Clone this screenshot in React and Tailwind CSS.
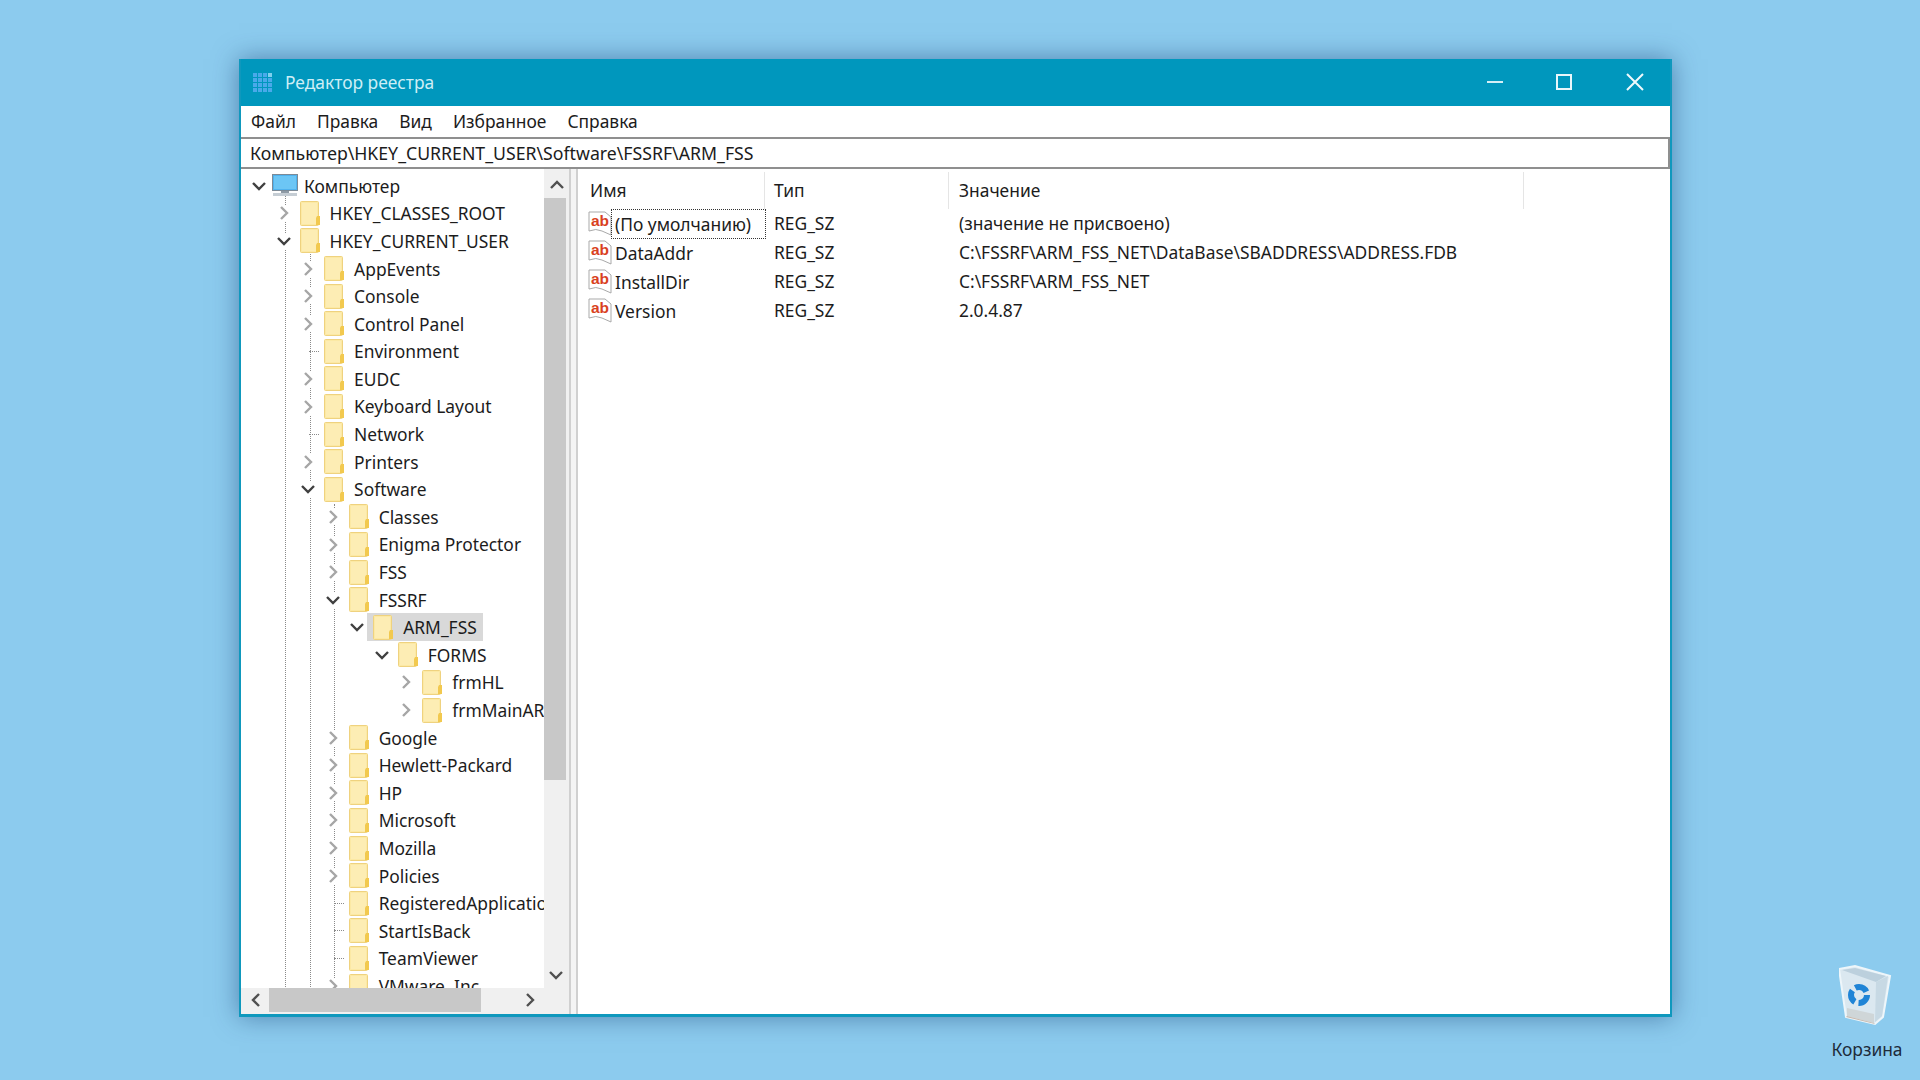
const tree = [
  { label: 'Компьютер', level: 0, open: true, root: true },
  { label: 'HKEY_CLASSES_ROOT', level: 1, closed: true },
  { label: 'HKEY_CURRENT_USER', level: 1, open: true },
  { label: 'AppEvents', level: 2, closed: true },
  { label: 'Console', level: 2, closed: true },
  { label: 'Control Panel', level: 2, closed: true },
  { label: 'Environment', level: 2, leaf: true },
  { label: 'EUDC', level: 2, closed: true },
  { label: 'Keyboard Layout', level: 2, closed: true },
  { label: 'Network', level: 2, leaf: true },
  { label: 'Printers', level: 2, closed: true },
  { label: 'Software', level: 2, open: true },
  { label: 'Classes', level: 3, closed: true },
  { label: 'Enigma Protector', level: 3, closed: true },
  { label: 'FSS', level: 3, closed: true },
  { label: 'FSSRF', level: 3, open: true },
  { label: 'ARM_FSS', level: 4, open: true, selected: true },
  { label: 'FORMS', level: 5, open: true },
  { label: 'frmHL', level: 6, closed: true },
  { label: 'frmMainARM', level: 6, closed: true },
  { label: 'Google', level: 3, closed: true },
  { label: 'Hewlett-Packard', level: 3, closed: true },
  { label: 'HP', level: 3, closed: true },
  { label: 'Microsoft', level: 3, closed: true },
  { label: 'Mozilla', level: 3, closed: true },
  { label: 'Policies', level: 3, closed: true },
  { label: 'RegisteredApplications', level: 3, leaf: true },
  { label: 'StartIsBack', level: 3, leaf: true },
  { label: 'TeamViewer', level: 3, leaf: true },
  { label: 'VMware, Inc.', level: 3, closed: true },
]

const values = [
  { name: '(По умолчанию)', type: 'REG_SZ', value: '(значение не присвоено)', focus: true },
  { name: 'DataAddr', type: 'REG_SZ', value: 'C:\\FSSRF\\ARM_FSS_NET\\DataBase\\SBADDRESS\\ADDRESS.FDB' },
  { name: 'InstallDir', type: 'REG_SZ', value: 'C:\\FSSRF\\ARM_FSS_NET' },
  { name: 'Version', type: 'REG_SZ', value: '2.0.4.87' },
]

function Chevron({ dir, className }) {
  const d = {
    down: 'M2 5 L8 11 L14 5',
    right: 'M5 2 L11 8 L5 14',
    up: 'M2 11 L8 5 L14 11',
    left: 'M11 2 L5 8 L11 14',
  }[dir]
  return (
    <svg width="16" height="16" viewBox="0 0 16 16" fill="none" className={className}>
      <path d={d} stroke="currentColor" strokeWidth="2.4" />
    </svg>
  )
}

function Folder() {
  return (
    <svg width="21" height="25" viewBox="0 0 21 25" className="shrink-0">
      <rect x="0.5" y="0.5" width="18" height="24" rx="1" fill="#fce9a4" stroke="#efd27f" />
      <rect x="2" y="2" width="15" height="21" fill="#fdedb4" />
      <path d="M17 15 h3 v9 h-4 v-7 z" fill="#f2c94f" />
    </svg>
  )
}

function ComputerIcon() {
  return (
    <svg width="26" height="24" viewBox="0 0 26 24" className="shrink-0">
      <rect x="0.5" y="0.5" width="25" height="16" fill="#4fb2ee" stroke="#7c8a96" />
      <rect x="2" y="2" width="22" height="13" fill="#6cc6f5" />
      <rect x="9" y="17" width="8" height="2" fill="#8e9aa5" />
      <rect x="1" y="19" width="24" height="3" fill="#c5cdd4" />
    </svg>
  )
}

function ValueIcon() {
  return (
    <svg width="24" height="26" viewBox="0 0 24 26" className="shrink-0">
      <path d="M1 1 H17 L23 6 V24 L14 20 Q8 17 1 20 Z" fill="#fff" stroke="#a9a9a9" />
      <text x="3" y="15" fontSize="15.5" fontWeight="700" fontFamily="'Liberation Sans', sans-serif" fill="#d9411e">ab</text>
    </svg>
  )
}

function RegeditIcon() {
  const cells = [0, 1, 2, 3]
  return (
    <div className="grid w-[19px] shrink-0 grid-cols-4 gap-[1px]">
      {cells.map(r => cells.map(c => (
        <div key={`${r}-${c}`} className={`h-[4px] ${r === 0 && c === 3 ? 'bg-[#7fd0ee]' : 'bg-[#49a9ea]'}`} />
      )))}
    </div>
  )
}

function RecycleBin() {
  return (
    <svg width="56" height="62" viewBox="0 0 56 62">
      <path d="M0 5 L16 2 L51 12 L44 53 L36 60 L7 53 Z" fill="#dbe8f0" stroke="#eef6fa" strokeWidth="2" />
      <path d="M3 6 L16 4 L47 12 L37 18 Z" fill="#bcd0dd" />
      <path d="M37 18 L49 12 L43 52 L36 58 Z" fill="#c7d9e4" />
      <path d="M8 44 L35 50 L35 59 L8 52 Z" fill="#cfd6d8" />
      <path d="M8 52 L35 59 L36 60 L7 53 Z" fill="#c9b9ad" />
      <circle cx="20" cy="31" r="8" fill="none" stroke="#1f84d6" strokeWidth="6" strokeDasharray="13 3.8" />
    </svg>
  )
}

function TreeRow({ item }) {
  const pad = 10 + item.level * 24.55
  return (
    <div className="relative flex h-[27.6px] items-center whitespace-nowrap" style={{ paddingLeft: pad }}>
      <div className={`flex h-[16px] w-[16px] shrink-0 items-center justify-center ${item.leaf ? '' : 'bg-white'}`}>
        {item.open && <Chevron dir="down" className="shrink-0 text-[#404040]" />}
        {item.closed && <Chevron dir="right" className="shrink-0 text-[#a6a6a6]" />}
        {item.leaf && <div className="ml-[12px] w-[10px] shrink-0 border-t border-dotted border-[#8a8a8a]" />}
      </div>
      <div className={`ml-[2px] flex h-[28px] items-center pr-[6px] ${item.root ? 'pl-[3px]' : 'pl-[6px]'} ${item.selected ? 'bg-[#d9d9d9]' : ''}`}>
        {item.root ? <ComputerIcon /> : <Folder />}
        <span className={item.root ? 'ml-[6px]' : 'ml-[9px]'}>{item.label}</span>
      </div>
    </div>
  )
}

export default function App() {
  return (
    <div className="relative h-[1080px] w-[1920px] overflow-hidden bg-[#8ccbee] text-[17.4px] text-[#1c1c1c] font-['Noto_Sans','Open_Sans',sans-serif]">
      <div className="absolute left-[239px] top-[59px] flex h-[958px] w-[1433px] flex-col border-x-[2px] border-b-[3px] border-[#0f98bd] bg-white shadow-[0_0_24px_rgba(20,60,110,0.5)]">
        <div className="flex h-[47px] shrink-0 items-center bg-[#0097bd] pl-[12px] text-[#cdeef6]">
          <RegeditIcon />
          <span className="ml-[13px]">Редактор реестра</span>
          <div className="ml-auto flex items-center pb-[2px]">
            <div className="h-[2px] w-[16px] bg-[#d5eff6]" />
            <div className="ml-[53px] h-[16px] w-[16px] border-2 border-[#e8f7fb]" />
            <svg width="18" height="18" viewBox="0 0 18 18" className="ml-[54px] mr-[26px] text-[#f0fafc]">
              <path d="M1 1 L17 17 M17 1 L1 17" stroke="currentColor" strokeWidth="2" />
            </svg>
          </div>
        </div>

        <div className="mt-[1px] flex h-[30px] shrink-0 items-center gap-[21px] pb-[2px] pl-[10px]">
          <span>Файл</span>
          <span>Правка</span>
          <span>Вид</span>
          <span>Избранное</span>
          <span>Справка</span>
        </div>

        <div className="flex h-[32px] shrink-0 items-center border-y-2 border-r-2 border-l-0 border-[#8f8f8f] pl-[9px] text-[17.7px]">
          Компьютер\HKEY_CURRENT_USER\Software\FSSRF\ARM_FSS
        </div>

        <div className="flex min-h-0 flex-1">
          <div className="relative flex w-[328px] shrink-0 flex-col overflow-hidden">
            <div className="flex min-h-0 flex-1">
              <div className="relative min-w-0 flex-1 overflow-hidden pt-[3px]">
                <div className="absolute left-[44px] top-[26px] h-[800px] border-l border-dotted border-[#8a8a8a]" />
                <div className="absolute left-[69px] top-[82px] h-[740px] border-l border-dotted border-[#8a8a8a]" />
                <div className="absolute left-[93px] top-[335px] h-[490px] border-l border-dotted border-[#8a8a8a]" />
                {tree.map(item => <TreeRow key={item.label} item={item} />)}
              </div>
              <div className="flex w-[25px] shrink-0 flex-col bg-[#f0f0f0] text-[#505050]">
                <div className="flex h-[29px] shrink-0 items-center justify-center pt-[3px]"><Chevron dir="up" /></div>
                <div className="h-[582px] w-[22px] bg-[#c8c8c8]" />
                <div className="mt-auto flex h-[26px] shrink-0 items-center justify-center pr-[2px]"><Chevron dir="down" /></div>
              </div>
            </div>
            <div className="flex h-[26px] shrink-0 items-start bg-[#f0f0f0] text-[#505050]">
              <div className="flex h-[24px] w-[28px] shrink-0 items-center justify-center pl-[1px]"><Chevron dir="left" /></div>
              <div className="h-[24px] w-[212px] bg-[#c8c8c8]" />
              <div className="ml-[35px] flex h-[24px] w-[28px] shrink-0 items-center justify-center"><Chevron dir="right" /></div>
            </div>
          </div>

          <div className="w-[9px] shrink-0 border-x-2 border-[#d0d0d0] bg-[#f4f4f4]" />

          <div className="min-w-0 flex-1 pl-[10px] pt-[3px]">
            <div className="flex h-[37px] items-center">
              <div className="h-full w-[177px] border-r border-[#e5e5e5] pl-[2px] leading-[37px]">Имя</div>
              <div className="h-full w-[184px] border-r border-[#e5e5e5] pl-[9px] leading-[37px]">Тип</div>
              <div className="h-full w-[575px] border-r border-[#e5e5e5] pl-[10px] leading-[37px]">Значение</div>
            </div>
            {values.map(v => (
              <div key={v.name} className="flex h-[29px] items-center whitespace-nowrap">
                <div className="flex w-[177px] shrink-0 items-center">
                  <ValueIcon />
                  <span className={`w-[154px] px-[3px] leading-[28px] ${v.focus ? 'outline-1 outline-dotted outline-[#333]' : ''}`}>{v.name}</span>
                </div>
                <div className="w-[184px] shrink-0 pl-[9px]">{v.type}</div>
                <div className="pl-[10px]">{v.value}</div>
              </div>
            ))}
          </div>
        </div>
      </div>

      <div className="absolute left-[1820px] top-[964px] flex w-[94px] flex-col items-center">
        <RecycleBin />
        <span className="mt-[10px] text-[#1e2b3a]">Корзина</span>
      </div>
    </div>
  )
}
